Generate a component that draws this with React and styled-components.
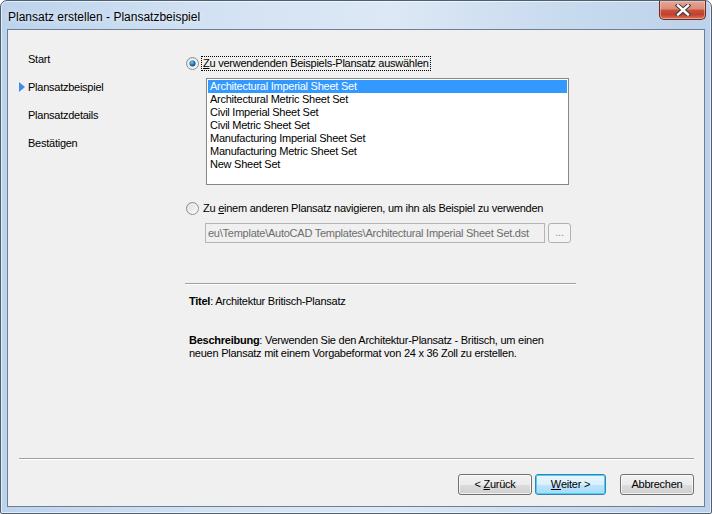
import styled, { createGlobalStyle } from 'styled-components'

const GlobalStyle = createGlobalStyle`
    html, body {
        margin: 0;
        padding: 0;
        background: #ffffff;
    }
    body {
        font-family: "Liberation Sans", Arial, sans-serif;
        font-size: 11px;
        letter-spacing: -0.25px;
        color: #000;
    }
`

const STEPS = ["Start", "Plansatzbeispiel", "Plansatzdetails", "Bestätigen"]
const SHEET_SETS = [
    "Architectural Imperial Sheet Set",
    "Architectural Metric Sheet Set",
    "Civil Imperial Sheet Set",
    "Civil Metric Sheet Set",
    "Manufacturing Imperial Sheet Set",
    "Manufacturing Metric Sheet Set",
    "New Sheet Set",
]

const Radio = ({checked}) => (
    <RadioBox width="13" height="13" viewBox="0 0 13 13">
        <defs>
            <linearGradient id={checked ? "rbOn" : "rbOff"} x1="0" y1="0" x2="1" y2="1">
                <stop offset="0" stopColor="#d8d8d8" />
                <stop offset="1" stopColor="#fdfdfd" />
            </linearGradient>
            <radialGradient id="rbDot" cx="0.4" cy="0.35" r="0.7">
                <stop offset="0" stopColor="#7fd0fb" />
                <stop offset="0.5" stopColor="#1d7fc4" />
                <stop offset="1" stopColor="#0c3d6e" />
            </radialGradient>
        </defs>
        <circle cx="6.5" cy="6.5" r="6" fill={`url(#${checked ? "rbOn" : "rbOff"})`} stroke="#8e8f8f" />
        <circle cx="6.5" cy="6.5" r="4.2" fill="none" stroke="#f4f4f4" strokeWidth="1" />
        {checked ? <circle cx="6.5" cy="6.5" r="3" fill="url(#rbDot)" /> : null}
    </RadioBox>
)

const CloseIcon = () => (
    <svg width="16" height="12" viewBox="0 0 16 12">
        <path d="M3 1.5 L13 10.5 M13 1.5 L3 10.5" stroke="#3a3a3a" strokeWidth="4.4" strokeLinecap="square" />
        <path d="M3 1.5 L13 10.5 M13 1.5 L3 10.5" stroke="#ffffff" strokeWidth="2.4" strokeLinecap="square" />
    </svg>
)

const App = () => {
    return (
        <>
            <GlobalStyle />
            <Window>
                <TitleBar>
                    <Title>Plansatz erstellen - Plansatzbeispiel</Title>
                    <CloseButton><CloseIcon /></CloseButton>
                </TitleBar>
                <Client>
                    <Body>
                        <Nav>
                            {STEPS.map((s) => (
                                <NavItem key={s} active={s === "Plansatzbeispiel"}>{s}</NavItem>
                            ))}
                        </Nav>
                        <Content>
                            <OptionRow>
                                <Radio checked />
                                <FocusLabel><u>Z</u>u verwendenden Beispiels-Plansatz auswählen</FocusLabel>
                            </OptionRow>
                            <ListBox>
                                {SHEET_SETS.map((s, i) => (
                                    <ListItem key={s} selected={i === 0}>{s}</ListItem>
                                ))}
                            </ListBox>
                            <OptionRow second>
                                <Radio />
                                <OptionLabel>Zu <u>e</u>inem anderen Plansatz navigieren, um ihn als Beispiel zu verwenden</OptionLabel>
                            </OptionRow>
                            <PathRow>
                                <PathBox>eu\Template\AutoCAD Templates\Architectural Imperial Sheet Set.dst</PathBox>
                                <BrowseButton>...</BrowseButton>
                            </PathRow>
                            <Rule />
                            <InfoLine><b>Titel</b>: Architektur Britisch-Plansatz</InfoLine>
                            <InfoLine description>
                                <b>Beschreibung</b>: Verwenden Sie den Architektur-Plansatz - Britisch, um einen<br />
                                neuen Plansatz mit einem Vorgabeformat von 24 x 36 Zoll zu erstellen.
                            </InfoLine>
                        </Content>
                    </Body>
                    <BottomRule />
                    <ButtonRow>
                        <DialogButton width={74}>&lt;&nbsp;<u>Z</u>urück</DialogButton>
                        <DialogButton width={71} primary><u>W</u>eiter&nbsp;&gt;</DialogButton>
                        <DialogButton width={74} spaced>Abbrechen</DialogButton>
                    </ButtonRow>
                </Client>
            </Window>
        </>
    )
}

const Window = styled.div`
    box-sizing: border-box;
    width: 712px;
    height: 514px;
    border: 1px solid #4e5f72;
    border-radius: 7px 7px 2px 2px;
    background: linear-gradient(90deg, #bcd3ec 0%, #d3e2f3 30%, #dce8f5 55%, #c8daee 80%, #bcd2ea 100%);
    padding: 0 6px 6px 6px;
    display: flex;
    flex-direction: column;
    box-shadow: inset 0 0 0 1px rgba(255, 255, 255, 0.6);
`

const TitleBar = styled.div`
    height: 28px;
    display: flex;
    justify-content: space-between;
    align-items: flex-start;
`

const Title = styled.div`
    font-family: "Liberation Sans", Arial, sans-serif;
    font-size: 12px;
    letter-spacing: 0;
    padding: 9px 0 0 1px;
    color: #000;
    text-shadow: 0 0 6px rgba(255, 255, 255, 0.9);
`

const CloseButton = styled.div`
    box-sizing: border-box;
    width: 47px;
    height: 19px;
    margin-right: -1px;
    border: 1px solid #6e2a21;
    border-top: none;
    border-radius: 0 0 5px 5px;
    background: linear-gradient(180deg, #e8a795 0%, #d98b78 45%, #c7503c 50%, #c2402d 75%, #d8745c 100%);
    box-shadow: inset 0 0 0 1px rgba(255, 210, 200, 0.5);
    display: flex;
    align-items: center;
    justify-content: center;
`

const Client = styled.div`
    flex: 1;
    border: 1px solid #6d7f94;
    background: #f0f0f0;
    display: flex;
    flex-direction: column;
    padding: 0 10px 11px 11px;
`

const Body = styled.div`
    flex: 1;
    display: flex;
`

const Nav = styled.div`
    box-sizing: border-box;
    width: 167px;
    padding: 23px 0 0 9px;
    display: flex;
    flex-direction: column;
    gap: 15px;
`

const NavItem = styled.div`
    position: relative;
    line-height: 13px;
    &::before {
        content: "";
        display: ${props => props.active ? "block" : "none"};
        position: absolute;
        left: -9px;
        top: 1px;
        border-top: 5px solid transparent;
        border-bottom: 5px solid transparent;
        border-left: 6px solid #3d8ee6;
    }
`

const Content = styled.div`
    flex: 1;
    padding-top: 26px;
    display: flex;
    flex-direction: column;
    align-items: flex-start;
`

const OptionRow = styled.div`
    display: flex;
    align-items: center;
    height: 15px;
    margin-top: ${props => props.second ? "16px" : "0"};
`

const RadioBox = styled.svg`
    flex: none;
    display: block;
`

const FocusLabel = styled.span`
    margin-left: 2px;
    padding: 0 1px;
    line-height: 13px;
    border: 1px dotted #000;
`

const OptionLabel = styled.span`
    margin-left: 4px;
    line-height: 13px;
`

const ListBox = styled.div`
    box-sizing: border-box;
    width: 363px;
    height: 107px;
    margin: 7px 0 0 20px;
    border: 1px solid #828790;
    background: #fff;
    padding: 1px;
`

const ListItem = styled.div`
    height: 13px;
    line-height: 13px;
    padding-left: 2px;
    background: ${props => props.selected ? "#3399ff" : "transparent"};
    color: ${props => props.selected ? "#fff" : "#000"};
`

const PathRow = styled.div`
    display: flex;
    gap: 3px;
    margin: 7px 0 0 19px;
`

const PathBox = styled.div`
    box-sizing: border-box;
    width: 340px;
    height: 20px;
    line-height: 18px;
    padding-left: 2px;
    border: 1px solid #b5b5b5;
    background: #f0f0f0;
    color: #6d6d6d;
    white-space: nowrap;
    overflow: hidden;
`

const BrowseButton = styled.div`
    box-sizing: border-box;
    width: 23px;
    height: 20px;
    border: 1px solid #adb2b5;
    border-radius: 3px;
    background: #f4f4f4;
    color: #8d8d8d;
    text-align: center;
    line-height: 16px;
`

const Rule = styled.div`
    width: 391px;
    height: 0;
    margin: 40px 0 0 -1px;
    border-top: 1px solid #a0a0a0;
    border-bottom: 1px solid #ffffff;
`

const InfoLine = styled.div`
    margin: ${props => props.description ? "26px" : "10px"} 0 0 3px;
    line-height: 13px;
    b {
        font-weight: bold;
    }
`

const BottomRule = styled.div`
    height: 0;
    border-top: 1px solid #a0a0a0;
    border-bottom: 1px solid #ffffff;
`

const ButtonRow = styled.div`
    display: flex;
    justify-content: flex-end;
    gap: 3px;
    margin-top: 14px;
`

const DialogButton = styled.div`
    box-sizing: border-box;
    width: ${props => props.width}px;
    height: 21px;
    margin-left: ${props => props.spaced ? "11px" : "0"};
    border: 1px solid ${props => props.primary ? "#3c7fb1" : "#707070"};
    border-radius: 3px;
    background: ${props => props.primary
        ? "linear-gradient(180deg, #eaf6fd 0%, #d9f0fc 50%, #bee6fd 51%, #a7d9f5 100%)"
        : "linear-gradient(180deg, #f2f2f2 0%, #ebebeb 50%, #dddddd 51%, #cfcfcf 100%)"};
    box-shadow: inset 0 0 0 1px ${props => props.primary ? "#48d2fa" : "rgba(255, 255, 255, 0.7)"};
    display: flex;
    align-items: center;
    justify-content: center;
    line-height: 13px;
`

export default App
